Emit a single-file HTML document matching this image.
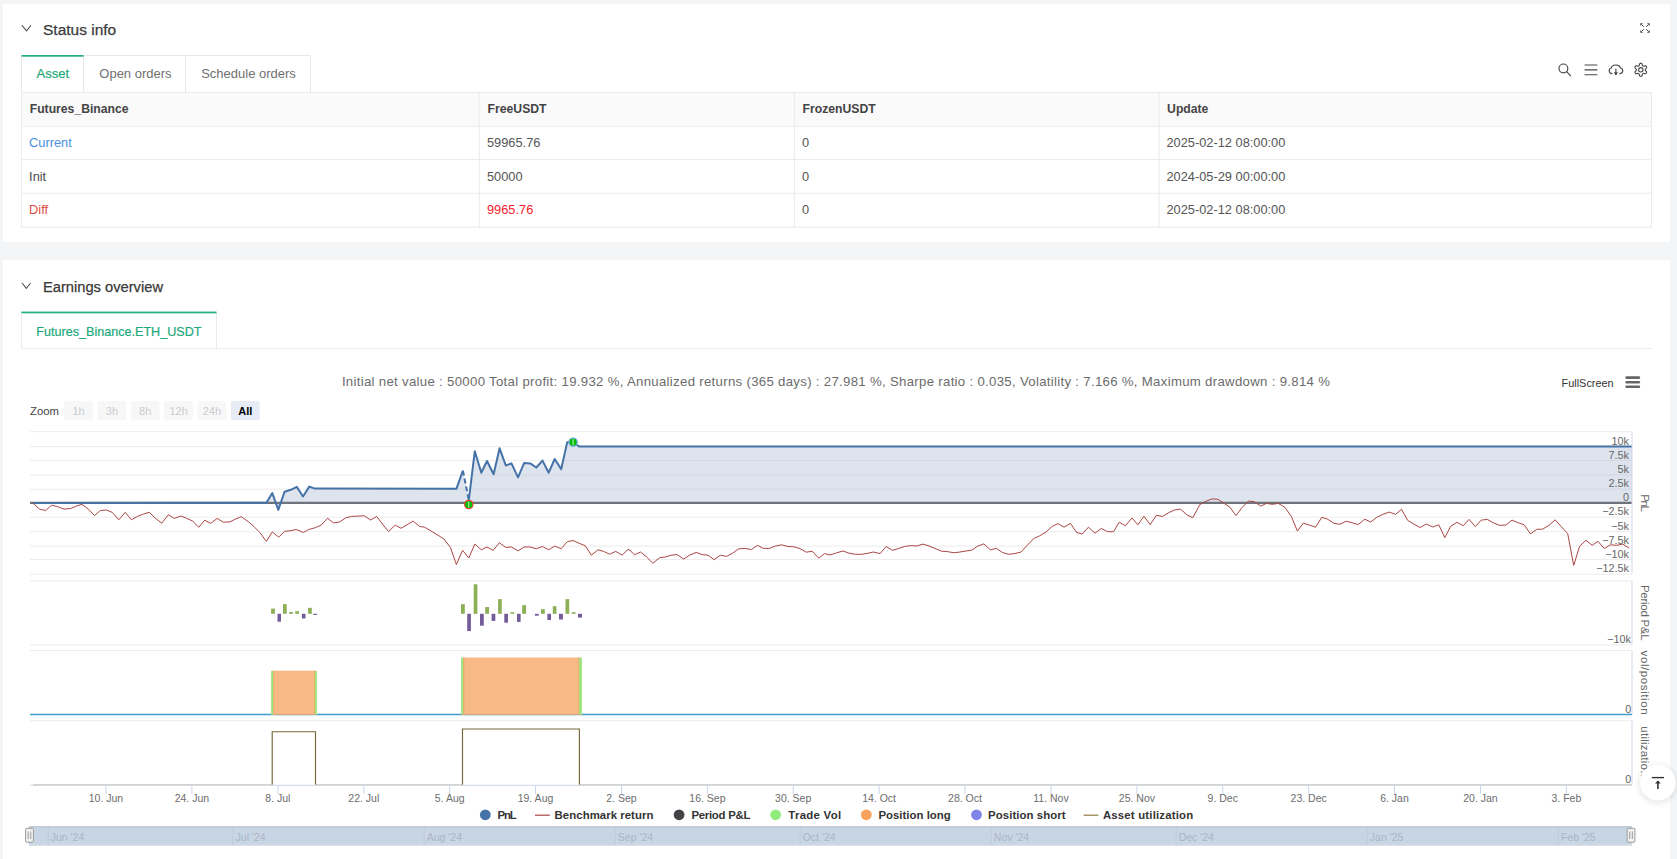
<!DOCTYPE html><html><head><meta charset="utf-8"><style>
html,body{margin:0;padding:0;background:#f4f5f7;width:1677px;height:859px;overflow:hidden}
svg{position:absolute;left:0;top:0;display:block}
text{font-family:"Liberation Sans", sans-serif}
</style></head><body>
<svg width="1677" height="859" viewBox="0 0 1677 859">
<rect x="0" y="0" width="1677" height="859" fill="#f4f5f7"/>
<rect x="3" y="4" width="1667" height="238" fill="#fff"/>
<rect x="3" y="260" width="1667" height="620" fill="#fff"/>

<polyline points="22,25.3 26.5,30.8 31,25.3" fill="none" stroke="#555" stroke-width="1.1"/>
<text x="43" y="35" font-size="15.5" fill="#3a3a3a" stroke="#3a3a3a" stroke-width="0.25">Status info</text>
<g stroke="#4a4a4a" stroke-width="1.0" fill="none"><path d="M1641.5,24.5 L1643.9,26.9 M1648.5,24.5 L1646.1,26.9 M1641.5,31.5 L1643.9,29.1 M1648.5,31.5 L1646.1,29.1"/></g>
<g fill="#4a4a4a"><path d="M1640.3,23.3 h2.8 l-2.8,2.8z"/><path d="M1649.7,23.3 h-2.8 l2.8,2.8z"/><path d="M1640.3,32.7 h2.8 l-2.8,-2.8z"/><path d="M1649.7,32.7 h-2.8 l2.8,-2.8z"/></g>
<g fill="none" stroke="#e8e8e8" stroke-width="1"><path d="M21.5,92.5 V55.5 H310.5 V92.5"/><path d="M83.5,55.5 V92.5 M185.5,55.5 V92.5"/></g>
<rect x="21.5" y="55" width="62" height="1.7" fill="#22ad80"/>
<text x="36.5" y="78" font-size="13" fill="#1ba97a" stroke="#1ba97a" stroke-width="0.2">Asset</text>
<text x="99.3" y="78" font-size="13" fill="#707070">Open orders</text>
<text x="201.2" y="78" font-size="13" fill="#707070">Schedule orders</text>
<g fill="none" stroke="#474747" stroke-width="1.15" stroke-linecap="round"><circle cx="1563.4" cy="68.4" r="4.4"/><path d="M1566.6,71.6 L1570.6,75.8"/><path d="M1585,65 H1597 M1585,69.9 H1597 M1585,74.7 H1597"/><path d="M1612,73.6 C1608.5,73.6 1608.3,68.5 1611.3,68 C1612,64.5 1619,63.5 1620.6,68 C1623.5,68.5 1623.5,73.6 1619.8,73.6"/><path d="M1615.9,69 V74.5"/></g>
<path d="M1613.8,72.3 L1615.9,75.4 L1618,72.3z" fill="#474747"/>
<polygon points="1640.8,63.4 1641.1,63.4 1641.5,63.4 1641.8,63.6 1642.0,64.0 1642.2,64.5 1642.3,65.0 1642.5,65.5 1642.6,65.7 1642.8,65.8 1643.0,65.9 1643.3,66.0 1643.4,66.2 1643.7,66.2 1644.2,66.1 1644.7,65.9 1645.2,65.9 1645.7,65.8 1646.0,66.0 1646.2,66.3 1646.3,66.6 1646.5,66.9 1646.6,67.2 1646.7,67.5 1646.4,68.0 1646.1,68.4 1645.7,68.8 1645.4,69.1 1645.3,69.3 1645.3,69.6 1645.3,69.8 1645.3,70.0 1645.3,70.3 1645.4,70.5 1645.7,70.8 1646.1,71.2 1646.4,71.6 1646.7,72.1 1646.6,72.4 1646.5,72.7 1646.3,73.0 1646.2,73.3 1646.0,73.6 1645.7,73.8 1645.2,73.7 1644.7,73.7 1644.2,73.5 1643.7,73.4 1643.4,73.4 1643.3,73.6 1643.0,73.7 1642.8,73.8 1642.6,73.9 1642.5,74.1 1642.3,74.6 1642.2,75.1 1642.0,75.6 1641.8,76.0 1641.5,76.2 1641.1,76.2 1640.8,76.2 1640.5,76.2 1640.1,76.2 1639.8,76.0 1639.6,75.6 1639.4,75.1 1639.3,74.6 1639.1,74.1 1639.0,73.9 1638.8,73.8 1638.5,73.7 1638.3,73.6 1638.2,73.4 1637.9,73.4 1637.4,73.5 1636.9,73.7 1636.4,73.7 1635.9,73.8 1635.6,73.6 1635.4,73.3 1635.3,73.0 1635.1,72.7 1635.0,72.4 1634.9,72.1 1635.2,71.6 1635.5,71.2 1635.9,70.8 1636.2,70.5 1636.3,70.3 1636.3,70.0 1636.3,69.8 1636.3,69.6 1636.3,69.3 1636.2,69.1 1635.9,68.8 1635.5,68.4 1635.2,68.0 1634.9,67.5 1635.0,67.2 1635.1,66.9 1635.3,66.6 1635.4,66.3 1635.6,66.0 1635.9,65.8 1636.4,65.9 1636.9,65.9 1637.4,66.1 1637.9,66.2 1638.2,66.2 1638.3,66.0 1638.5,65.9 1638.8,65.8 1639.0,65.7 1639.1,65.5 1639.3,65.0 1639.4,64.5 1639.6,64.0 1639.8,63.6 1640.1,63.4 1640.5,63.4" fill="none" stroke="#474747" stroke-width="1.1" stroke-linejoin="round"/>
<circle cx="1640.8" cy="69.8" r="2.2" fill="none" stroke="#474747" stroke-width="1.1"/>
<rect x="21.5" y="92.5" width="1630" height="34" fill="#fafafa"/>
<g stroke="#ebebeb" stroke-width="1" fill="none"><rect x="21.5" y="92.5" width="1630" height="134.7"/><path d="M21.5,126.3 H1651.5 M21.5,159.4 H1651.5 M21.5,193.2 H1651.5"/><path d="M479.3,92.5 V227.2 M794.4,92.5 V227.2 M1159.2,92.5 V227.2"/></g>
<text x="29.7" y="113" font-size="12.2" font-weight="bold" fill="#444">Futures_Binance</text>
<text x="487.6" y="113" font-size="12.2" font-weight="bold" fill="#444">FreeUSDT</text>
<text x="802.5" y="113" font-size="12.2" font-weight="bold" fill="#444">FrozenUSDT</text>
<text x="1167.1" y="113" font-size="12.2" font-weight="bold" fill="#444">Update</text>
<text x="29.1" y="147.2" font-size="12.8" fill="#4a90e2">Current</text>
<text x="487.0" y="147.2" font-size="12.8" fill="#555">59965.76</text>
<text x="801.9" y="147.2" font-size="12.8" fill="#555">0</text>
<text x="1166.5" y="147.2" font-size="12.8" fill="#555">2025-02-12 08:00:00</text>
<text x="29.1" y="181.0" font-size="12.8" fill="#4a4a4a">Init</text>
<text x="487.0" y="181.0" font-size="12.8" fill="#555">50000</text>
<text x="801.9" y="181.0" font-size="12.8" fill="#555">0</text>
<text x="1166.5" y="181.0" font-size="12.8" fill="#555">2024-05-29 00:00:00</text>
<text x="29.1" y="214.1" font-size="12.8" fill="#dc4a40">Diff</text>
<text x="487.0" y="214.1" font-size="12.8" fill="#f5222d">9965.76</text>
<text x="801.9" y="214.1" font-size="12.8" fill="#555">0</text>
<text x="1166.5" y="214.1" font-size="12.8" fill="#555">2025-02-12 08:00:00</text>
<polyline points="22,283 26.3,288.3 30.6,283" fill="none" stroke="#555" stroke-width="1.1"/>
<text x="43" y="291.8" font-size="14.7" fill="#3a3a3a" stroke="#3a3a3a" stroke-width="0.25">Earnings overview</text>
<g fill="none" stroke="#ebebeb" stroke-width="1"><path d="M21.5,348.5 V312.5 H216.5 V348.5"/><path d="M21.5,348.5 H1652"/></g>
<rect x="21.5" y="311.6" width="195" height="1.7" fill="#22ad80"/>
<text x="36.3" y="335.7" font-size="12.6" fill="#1ba97a" stroke="#1ba97a" stroke-width="0.2">Futures_Binance.ETH_USDT</text>
<text x="341.9" y="385.5" font-size="13.2" fill="#6c6c6c" textLength="988" lengthAdjust="spacing">Initial net value : 50000 Total profit: 19.932 %, Annualized returns (365 days) : 27.981 %, Sharpe ratio : 0.035, Volatility : 7.166 %, Maximum drawdown : 9.814 %</text>
<text x="1561.6" y="386.8" font-size="11" fill="#333" textLength="52" lengthAdjust="spacingAndGlyphs">FullScreen</text>
<path d="M1626.6,377.6 H1638.9 M1626.6,382.2 H1638.9 M1626.6,386.8 H1638.9" stroke="#666" stroke-width="2.6" stroke-linecap="round"/>
<text x="30" y="415" font-size="11.3" fill="#444">Zoom</text>
<rect x="64.2" y="401" width="28.7" height="19.2" rx="2" fill="#f7f7f7"/>
<text x="78.5" y="415" font-size="11" text-anchor="middle" fill="#ccc" >1h</text>
<rect x="97.5" y="401" width="28.7" height="19.2" rx="2" fill="#f7f7f7"/>
<text x="111.9" y="415" font-size="11" text-anchor="middle" fill="#ccc" >3h</text>
<rect x="130.9" y="401" width="28.7" height="19.2" rx="2" fill="#f7f7f7"/>
<text x="145.2" y="415" font-size="11" text-anchor="middle" fill="#ccc" >8h</text>
<rect x="164.2" y="401" width="28.7" height="19.2" rx="2" fill="#f7f7f7"/>
<text x="178.6" y="415" font-size="11" text-anchor="middle" fill="#ccc" >12h</text>
<rect x="197.6" y="401" width="28.7" height="19.2" rx="2" fill="#f7f7f7"/>
<text x="211.9" y="415" font-size="11" text-anchor="middle" fill="#ccc" >24h</text>
<rect x="230.9" y="401" width="28.7" height="19.2" rx="2" fill="#e6ebf5"/>
<text x="245.3" y="415" font-size="11" text-anchor="middle" fill="#000" font-weight="bold">All</text>
<path d="M30,431.7 H1632 M30,446.7 H1632 M30,460.4 H1632 M30,475.0 H1632 M30,489.2 H1632 M30,502.8 H1632 M30,517.2 H1632 M30,531.7 H1632 M30,546.1 H1632 M30,559.6 H1632 M30,574.2 H1632" stroke="#ececec" stroke-width="1" fill="none"/>
<clipPath id="ac"><polygon points="33.0,502.9 266.4,502.7 272.3,493.1 278.3,509.8 284.6,491.7 290.8,489.8 296.8,486.9 303.0,496.5 309.3,486.6 314.9,488.6 456.4,488.8 462.9,470.7 468.8,500.1 474.8,451.2 481.3,472.7 487.0,461.0 493.6,474.3 499.6,448.3 505.8,465.5 511.5,463.4 518.0,477.3 524.2,462.9 530.2,463.4 536.3,467.5 542.5,460.6 548.7,472.7 554.7,459.0 561.2,469.1 567.2,442.2 573.1,442.2 579.1,446.5 1632.0,446.5 1632.0,503.0"/></clipPath>
<polygon points="33.0,502.9 266.4,502.7 272.3,493.1 278.3,509.8 284.6,491.7 290.8,489.8 296.8,486.9 303.0,496.5 309.3,486.6 314.9,488.6 456.4,488.8 462.9,470.7 468.8,500.1 474.8,451.2 481.3,472.7 487.0,461.0 493.6,474.3 499.6,448.3 505.8,465.5 511.5,463.4 518.0,477.3 524.2,462.9 530.2,463.4 536.3,467.5 542.5,460.6 548.7,472.7 554.7,459.0 561.2,469.1 567.2,442.2 573.1,442.2 579.1,446.5 1632.0,446.5 1632.0,503.0" fill="#dee4ee"/>
<path d="M30,431.7 H1632 M30,446.7 H1632 M30,460.4 H1632 M30,475.0 H1632 M30,489.2 H1632 M30,502.8 H1632 M30,517.2 H1632 M30,531.7 H1632 M30,546.1 H1632 M30,559.6 H1632 M30,574.2 H1632" stroke="#d3d9e2" stroke-width="1" fill="none" clip-path="url(#ac)"/>
<path d="M30,502.8 H1632" stroke="#6e737b" stroke-width="2.2"/>
<polyline points="33.0,502.9 266.4,502.7 272.3,493.1 278.3,509.8 284.6,491.7 290.8,489.8 296.8,486.9 303.0,496.5 309.3,486.6 314.9,488.6 456.4,488.8 462.9,470.7" fill="none" stroke="#4572a7" stroke-width="2" stroke-linejoin="round"/>
<polyline points="462.9,470.7 468.8,500.1" fill="none" stroke="#4572a7" stroke-width="2" stroke-dasharray="5,3"/>
<polyline points="468.8,500.1 474.8,451.2 481.3,472.7 487.0,461.0 493.6,474.3 499.6,448.3 505.8,465.5 511.5,463.4 518.0,477.3 524.2,462.9 530.2,463.4 536.3,467.5 542.5,460.6 548.7,472.7 554.7,459.0 561.2,469.1 567.2,442.2 573.1,442.2 579.1,446.5 1632.0,446.5" fill="none" stroke="#4572a7" stroke-width="2" stroke-linejoin="round"/>
<polyline points="33.0,503.1 39.5,509.1 45.5,510.6 51.5,505.3 57.4,506.5 64.0,509.1 70.5,508.5 75.3,506.5 81.9,504.3 88.4,509.1 94.4,515.6 100.4,510.5 106.3,510.0 112.3,512.4 118.8,519.8 125.2,512.3 131.4,519.8 137.3,516.5 143.3,514.1 149.3,512.3 155.8,518.6 161.8,523.2 168.3,514.8 174.3,518.4 180.9,516.0 186.8,518.4 192.2,520.8 198.8,527.2 204.7,520.2 210.7,523.4 217.2,518.4 223.2,522.2 230.0,521.9 236.0,518.8 241.3,516.7 249.1,522.3 254.4,527.1 259.8,532.5 266.4,541.4 272.3,531.9 278.7,537.2 284.6,531.3 290.8,530.7 296.2,529.5 303.3,532.5 308.7,529.5 315.3,527.7 321.2,525.1 327.6,518.2 333.5,522.9 339.5,522.0 345.7,517.9 351.6,516.4 358.2,516.1 364.2,515.8 370.7,520.0 376.7,516.4 382.7,524.4 388.6,531.5 395.2,525.1 401.1,528.3 407.1,524.7 413.1,521.1 419.6,526.5 424.4,527.1 430.0,530.4 443.9,538.9 450.4,547.4 456.4,564.5 462.6,550.3 468.8,558.0 474.8,544.1 481.3,549.8 487.0,547.0 493.2,550.3 499.3,542.8 505.8,547.4 511.5,547.0 518.0,550.9 524.2,547.0 530.2,547.0 536.3,548.7 542.5,546.5 548.7,549.8 554.7,546.1 561.2,548.7 567.2,541.7 573.1,540.5 579.1,543.3 585.2,545.7 591.4,555.2 597.9,549.8 603.6,551.4 609.6,554.2 615.8,551.4 622.0,555.2 628.0,549.3 630.0,550.4 634.5,554.8 640.5,552.0 646.7,557.0 652.9,563.2 659.8,557.6 665.2,557.0 671.1,555.2 677.1,554.6 683.7,559.1 689.6,555.2 696.2,552.4 702.2,554.6 708.1,555.2 714.1,559.6 720.4,555.2 726.4,556.4 732.6,553.2 738.5,548.9 745.1,548.4 751.4,549.6 757.4,545.3 763.3,548.4 769.5,548.4 775.5,546.0 781.7,544.8 788.0,546.5 794.0,546.8 799.9,548.6 806.3,552.2 812.2,551.2 818.7,558.2 824.6,553.6 830.0,555.0 836.6,552.8 843.1,551.0 849.1,553.2 855.6,554.3 861.6,554.3 868.2,553.2 873.5,552.0 880.1,553.6 886.1,546.5 892.6,550.4 898.6,548.4 904.5,546.5 911.1,545.6 916.5,546.0 923.0,544.1 929.0,546.0 934.9,548.4 941.5,551.2 947.5,551.6 954.0,552.8 960.0,552.0 966.0,551.0 971.9,550.1 977.9,546.0 983.8,543.9 990.4,549.8 996.4,548.4 1002.3,552.4 1008.3,554.3 1014.3,553.6 1020.8,552.2 1030.0,542.3 1034.2,538.3 1039.5,535.9 1046.1,532.0 1052.1,526.4 1058.0,523.6 1064.0,527.2 1070.5,523.4 1076.5,532.3 1082.2,534.1 1088.4,527.2 1095.0,533.2 1101.3,528.4 1107.5,531.7 1113.5,531.7 1119.2,522.2 1125.4,525.8 1132.0,518.0 1137.9,524.8 1143.9,516.2 1150.2,524.6 1156.4,515.3 1162.4,516.5 1168.3,512.9 1174.3,510.0 1180.5,509.1 1187.2,515.0 1192.8,517.7 1199.9,504.5 1205.9,501.3 1211.9,498.9 1217.8,499.3 1223.8,503.1 1230.0,507.3 1236.0,515.6 1241.9,507.7 1248.5,501.0 1254.4,501.7 1260.8,506.1 1266.4,503.4 1272.3,504.3 1278.3,503.4 1284.9,507.3 1291.4,516.5 1297.4,531.1 1303.3,523.2 1309.7,525.2 1315.6,527.2 1321.8,517.2 1327.6,519.2 1333.8,523.2 1339.7,524.3 1346.3,521.2 1352.2,522.8 1358.2,524.6 1364.8,519.2 1370.7,522.0 1376.7,517.4 1382.7,514.4 1389.2,512.1 1395.5,514.4 1401.5,509.3 1407.7,520.4 1413.7,524.0 1420.2,527.6 1426.2,524.0 1432.8,527.0 1438.8,524.8 1444.8,537.6 1450.7,526.3 1456.9,522.3 1463.2,525.7 1469.1,519.4 1475.3,526.6 1481.3,520.1 1487.4,519.4 1493.2,522.8 1499.5,525.3 1505.8,525.1 1512.0,520.1 1518.3,522.8 1524.2,524.8 1530.4,533.8 1536.7,529.4 1542.7,529.1 1549.0,525.3 1555.2,519.8 1561.5,526.9 1567.7,533.6 1573.7,565.4 1579.6,546.3 1585.9,540.3 1592.2,545.3 1598.0,541.3 1604.3,548.6 1610.3,544.8 1616.6,545.3 1622.8,544.1 1629.1,548.2" fill="none" stroke="#aa4643" stroke-width="1" stroke-linejoin="round"/>
<circle cx="468.8" cy="504.5" r="4.2" fill="#00bd00" stroke="#e8453c" stroke-width="1.2"/>
<path d="M468.8,501.5 V507.5" stroke="#fff" stroke-width="0.8"/>
<circle cx="573.1" cy="442.2" r="4.2" fill="#00bd00" stroke="#7aaef0" stroke-width="1.2"/>
<path d="M573.1,439.2 V445.2" stroke="#fff" stroke-width="0.8"/>
<text x="1629" y="444.9" font-size="10.8" fill="#666" text-anchor="end">10k</text>
<text x="1629" y="458.6" font-size="10.8" fill="#666" text-anchor="end">7.5k</text>
<text x="1629" y="473.2" font-size="10.8" fill="#666" text-anchor="end">5k</text>
<text x="1629" y="487.4" font-size="10.8" fill="#666" text-anchor="end">2.5k</text>
<text x="1629" y="501.0" font-size="10.8" fill="#666" text-anchor="end">0</text>
<text x="1629" y="515.4" font-size="10.8" fill="#666" text-anchor="end">−2.5k</text>
<text x="1629" y="529.9" font-size="10.8" fill="#666" text-anchor="end">−5k</text>
<text x="1629" y="544.3" font-size="10.8" fill="#666" text-anchor="end">−7.5k</text>
<text x="1629" y="557.8" font-size="10.8" fill="#666" text-anchor="end">−10k</text>
<text x="1629" y="572.4" font-size="10.8" fill="#666" text-anchor="end">−12.5k</text>
<path d="M1632,432 V573.4 M1632,581 V645 M1632,650.6 V714.5 M1632,720.7 V784.8" stroke="#ccd6eb" stroke-width="1"/>
<path d="M30,581 H1632 M30,645 H1632" stroke="#ececec" stroke-width="1"/>
<rect x="271.1" y="608.6" width="3.8" height="5.2" fill="#8cb056"/>
<rect x="277.5" y="613.8" width="3.5" height="7.9" fill="#735c98"/>
<rect x="283.0" y="604.1" width="3.7" height="9.7" fill="#8cb056"/>
<rect x="289.1" y="612.0" width="3.8" height="1.8" fill="#8cb056"/>
<rect x="295.2" y="611.2" width="3.8" height="2.6" fill="#8cb056"/>
<rect x="301.9" y="613.8" width="3.6" height="4.7" fill="#735c98"/>
<rect x="308.1" y="607.8" width="3.7" height="6.0" fill="#8cb056"/>
<rect x="313.2" y="613.8" width="3.9" height="1.1" fill="#735c98"/>
<rect x="461.0" y="604.2" width="3.8" height="9.6" fill="#8cb056"/>
<rect x="467.2" y="613.8" width="3.7" height="17.2" fill="#735c98"/>
<rect x="473.7" y="584.3" width="3.7" height="29.5" fill="#8cb056"/>
<rect x="480.0" y="613.8" width="3.8" height="11.9" fill="#735c98"/>
<rect x="485.2" y="607.0" width="3.8" height="6.8" fill="#8cb056"/>
<rect x="491.6" y="613.8" width="3.7" height="7.1" fill="#735c98"/>
<rect x="498.1" y="599.1" width="3.6" height="14.7" fill="#8cb056"/>
<rect x="504.3" y="613.8" width="3.7" height="8.9" fill="#735c98"/>
<rect x="510.4" y="612.2" width="3.8" height="1.6" fill="#8cb056"/>
<rect x="517.0" y="613.8" width="3.6" height="8.1" fill="#735c98"/>
<rect x="522.2" y="605.2" width="3.8" height="8.6" fill="#8cb056"/>
<rect x="534.9" y="613.8" width="3.8" height="1.9" fill="#735c98"/>
<rect x="541.0" y="609.2" width="3.8" height="4.6" fill="#8cb056"/>
<rect x="547.4" y="613.8" width="3.6" height="6.2" fill="#735c98"/>
<rect x="552.8" y="606.2" width="3.6" height="7.6" fill="#8cb056"/>
<rect x="559.0" y="613.8" width="3.9" height="5.7" fill="#735c98"/>
<rect x="565.5" y="599.1" width="3.7" height="14.7" fill="#8cb056"/>
<rect x="571.7" y="612.2" width="3.9" height="1.6" fill="#8cb056"/>
<rect x="578.0" y="613.8" width="4.0" height="3.8" fill="#735c98"/>
<text x="1631" y="643.3" font-size="10.8" fill="#666" text-anchor="end">−10k</text>
<path d="M30,650.6 H1632" stroke="#ececec" stroke-width="1"/>
<path d="M30,714.5 H1632" stroke="#3fa0cf" stroke-width="1.6"/>
<rect x="271.3" y="670.7" width="45.5" height="44.3" fill="#f7ba86"/><rect x="271.3" y="714.1" width="45.5" height="0.9" fill="#cfa07a"/>
<rect x="272.9" y="670.7" width="1.3" height="43.8" fill="#e5b274"/><rect x="313.9" y="670.7" width="1.3" height="43.8" fill="#e5b274"/>
<rect x="271.3" y="671.2" width="1.6" height="43.3" fill="#90ed7d"/><rect x="315.2" y="671.2" width="1.6" height="43.3" fill="#90ed7d"/>
<rect x="461.2" y="657.5" width="120.6" height="57.4" fill="#f7ba86"/><rect x="461.2" y="714.1" width="120.6" height="0.9" fill="#cfa07a"/>
<rect x="463" y="657.5" width="1.4" height="56.9" fill="#e5b274"/><rect x="578.1" y="657.5" width="1.4" height="56.9" fill="#e5b274"/>
<rect x="461.2" y="658" width="1.8" height="56.4" fill="#90ed7d"/><rect x="579.5" y="658" width="2.3" height="56.4" fill="#90ed7d"/>
<text x="1631.3" y="712.8" font-size="10.8" fill="#666" text-anchor="end">0</text>
<path d="M30,720.7 H1632" stroke="#ececec" stroke-width="1"/>
<path d="M33,784.6 H272.2 M315.5,784.6 H462.5 M579.4,784.6 H1632" fill="none" stroke="#d9d2bb" stroke-width="1.2"/>
<path d="M272.2,784.8 V731.7 H315.5 V784.8 M462.5,784.8 V729 H579.4 V784.8" fill="none" stroke="#75663a" stroke-width="1.15"/>
<path d="M30,785.3 H1632" stroke="#ccd6eb" stroke-width="1"/>
<text x="1631.3" y="782.8" font-size="10.8" fill="#666" text-anchor="end">0</text>
<text x="1645" y="503.1" font-size="11.5" fill="#666" text-anchor="middle" dominant-baseline="central" transform="rotate(90 1645 503.1)" textLength="17.8" lengthAdjust="spacing">PnL</text>
<text x="1645" y="612.8" font-size="11.5" fill="#666" text-anchor="middle" dominant-baseline="central" transform="rotate(90 1645 612.8)" textLength="55.6" lengthAdjust="spacing">Period P&amp;L</text>
<text x="1645" y="682.6" font-size="11.5" fill="#666" text-anchor="middle" dominant-baseline="central" transform="rotate(90 1645 682.6)" textLength="64" lengthAdjust="spacing">vol/position</text>
<text x="1645" y="751.6" font-size="11.5" fill="#666" text-anchor="middle" dominant-baseline="central" transform="rotate(90 1645 751.6)" textLength="50.5" lengthAdjust="spacing">utilizatio..</text>
<text x="106.0" y="802" font-size="10.5" fill="#6c6c6c" text-anchor="middle">10. Jun</text>
<text x="191.9" y="802" font-size="10.5" fill="#6c6c6c" text-anchor="middle">24. Jun</text>
<text x="277.9" y="802" font-size="10.5" fill="#6c6c6c" text-anchor="middle">8. Jul</text>
<text x="363.8" y="802" font-size="10.5" fill="#6c6c6c" text-anchor="middle">22. Jul</text>
<text x="449.7" y="802" font-size="10.5" fill="#6c6c6c" text-anchor="middle">5. Aug</text>
<text x="535.5" y="802" font-size="10.5" fill="#6c6c6c" text-anchor="middle">19. Aug</text>
<text x="621.5" y="802" font-size="10.5" fill="#6c6c6c" text-anchor="middle">2. Sep</text>
<text x="707.4" y="802" font-size="10.5" fill="#6c6c6c" text-anchor="middle">16. Sep</text>
<text x="793.2" y="802" font-size="10.5" fill="#6c6c6c" text-anchor="middle">30. Sep</text>
<text x="879.1" y="802" font-size="10.5" fill="#6c6c6c" text-anchor="middle">14. Oct</text>
<text x="965.0" y="802" font-size="10.5" fill="#6c6c6c" text-anchor="middle">28. Oct</text>
<text x="1051.0" y="802" font-size="10.5" fill="#6c6c6c" text-anchor="middle">11. Nov</text>
<text x="1136.9" y="802" font-size="10.5" fill="#6c6c6c" text-anchor="middle">25. Nov</text>
<text x="1222.8" y="802" font-size="10.5" fill="#6c6c6c" text-anchor="middle">9. Dec</text>
<text x="1308.7" y="802" font-size="10.5" fill="#6c6c6c" text-anchor="middle">23. Dec</text>
<text x="1394.5" y="802" font-size="10.5" fill="#6c6c6c" text-anchor="middle">6. Jan</text>
<text x="1480.5" y="802" font-size="10.5" fill="#6c6c6c" text-anchor="middle">20. Jan</text>
<text x="1566.4" y="802" font-size="10.5" fill="#6c6c6c" text-anchor="middle">3. Feb</text>
<path d="M106.0,785.5 V794 M191.9,785.5 V794 M277.9,785.5 V794 M363.8,785.5 V794 M449.7,785.5 V794 M535.5,785.5 V794 M621.5,785.5 V794 M707.4,785.5 V794 M793.2,785.5 V794 M879.1,785.5 V794 M965.0,785.5 V794 M1051.0,785.5 V794 M1136.9,785.5 V794 M1222.8,785.5 V794 M1308.7,785.5 V794 M1394.5,785.5 V794 M1480.5,785.5 V794 M1566.4,785.5 V794" stroke="#ccd6eb" stroke-width="1"/>
<circle cx="485.3" cy="814.8" r="5.4" fill="#4572a7"/>
<text x="497.5" y="819" font-size="11.4" font-weight="bold" fill="#333" textLength="19.3" lengthAdjust="spacing">PnL</text>
<path d="M535.0,815.2 H549.8" stroke="#aa4643" stroke-width="1.2"/>
<text x="554.6" y="819" font-size="11.4" font-weight="bold" fill="#333" textLength="98.8" lengthAdjust="spacing">Benchmark return</text>
<circle cx="679.1" cy="814.8" r="5.4" fill="#434348"/>
<text x="691.4" y="819" font-size="11.4" font-weight="bold" fill="#333" textLength="59" lengthAdjust="spacing">Period P&amp;L</text>
<circle cx="775.6" cy="814.8" r="5.4" fill="#90ed7d"/>
<text x="788.3" y="819" font-size="11.4" font-weight="bold" fill="#333" textLength="52.8" lengthAdjust="spacing">Trade Vol</text>
<circle cx="866.3" cy="814.8" r="5.4" fill="#f7a35c"/>
<text x="878.4" y="819" font-size="11.4" font-weight="bold" fill="#333" textLength="72.4" lengthAdjust="spacing">Position long</text>
<circle cx="976.5" cy="814.8" r="5.4" fill="#8085e9"/>
<text x="988.1" y="819" font-size="11.4" font-weight="bold" fill="#333" textLength="77.5" lengthAdjust="spacing">Position short</text>
<path d="M1083.6,815.2 H1098.4" stroke="#8d7a3e" stroke-width="1.2"/>
<text x="1102.9" y="819" font-size="11.4" font-weight="bold" fill="#333" textLength="90.3" lengthAdjust="spacing">Asset utilization</text>
<rect x="28.9" y="826.2" width="1603" height="19.4" fill="#c8d5e4"/>
<path d="M28.9,826.9 H1632" stroke="#c0c6d0" stroke-width="1.4"/><path d="M28.9,845 H1632" stroke="#d8dbe0" stroke-width="1.2"/>
<text x="50.7" y="841.3" font-size="10.5" fill="#aab6c6">Jun '24</text>
<text x="235.6" y="841.3" font-size="10.5" fill="#aab6c6">Jul '24</text>
<text x="426.7" y="841.3" font-size="10.5" fill="#aab6c6">Aug '24</text>
<text x="617.8" y="841.3" font-size="10.5" fill="#aab6c6">Sep '24</text>
<text x="802.7" y="841.3" font-size="10.5" fill="#aab6c6">Oct '24</text>
<text x="993.8" y="841.3" font-size="10.5" fill="#aab6c6">Nov '24</text>
<text x="1178.7" y="841.3" font-size="10.5" fill="#aab6c6">Dec '24</text>
<text x="1369.8" y="841.3" font-size="10.5" fill="#aab6c6">Jan '25</text>
<text x="1560.9" y="841.3" font-size="10.5" fill="#aab6c6">Feb '25</text>
<path d="M48.1,826.6 V845.3 M233.0,826.6 V845.3 M424.1,826.6 V845.3 M615.2,826.6 V845.3 M800.1,826.6 V845.3 M991.2,826.6 V845.3 M1176.1,826.6 V845.3 M1367.2,826.6 V845.3 M1558.3,826.6 V845.3" stroke="#bfcbdb" stroke-width="1"/>
<rect x="25.6" y="828.3" width="7.8" height="13.9" rx="1" fill="#f2f2f2" stroke="#999" stroke-width="1"/>
<path d="M28.2,831.5 V839 M30.8,831.5 V839" stroke="#999" stroke-width="1"/>
<rect x="1627.1" y="828.3" width="7.8" height="13.9" rx="1" fill="#f2f2f2" stroke="#999" stroke-width="1"/>
<path d="M1629.7,831.5 V839 M1632.3,831.5 V839" stroke="#999" stroke-width="1"/>
<defs><filter id="sh" x="-50%" y="-50%" width="200%" height="200%"><feGaussianBlur stdDeviation="3"/></filter></defs>
<circle cx="1657.9" cy="784" r="19" fill="#000" opacity="0.10" filter="url(#sh)"/>
<circle cx="1657.9" cy="782.6" r="18" fill="#fff"/>
<path d="M1651.8,777.6 H1664" stroke="#333" stroke-width="1.4"/>
<path d="M1657.9,781 V789" stroke="#333" stroke-width="1.6"/><path d="M1655,783.5 L1657.9,780.4 L1660.8,783.5z" fill="#333"/>
</svg></body></html>
